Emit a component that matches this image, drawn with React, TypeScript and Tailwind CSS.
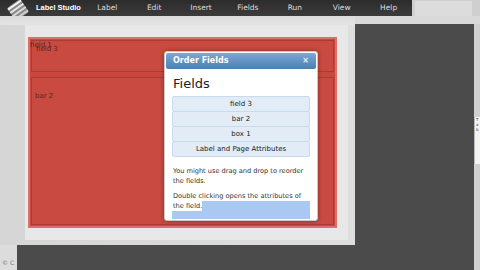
import React from 'react';

const menu = ['Label', 'Edit', 'Insert', 'Fields', 'Run', 'View', 'Help'];
const fields = ['field 3', 'bar 2', 'box 1', 'Label and Page Attributes'];

function Logo() {
  return (
    <svg width="24" height="22" viewBox="0 0 24 22" className="shrink-0">
      <g transform="rotate(-35 12 11)">
        <rect x="4" y="3" width="16" height="16" rx="2" fill="#8a8a8a" />
        <rect x="4" y="4" width="16" height="2" fill="#f2f2f2" />
        <rect x="4" y="8" width="16" height="2" fill="#e8e8e8" />
        <rect x="4" y="12" width="16" height="2" fill="#dcdcdc" />
        <rect x="4" y="16" width="16" height="2" fill="#cfcfcf" />
      </g>
    </svg>
  );
}

function OrderFields() {
  return (
    <div className="absolute left-[164px] top-[26px] w-[154px] h-[170px] bg-white rounded-[3px] border border-[#c9c9c9] shadow-[0_0_4px_rgba(0,0,0,0.35)] p-[1px] flex flex-col">
      <div className="h-[16px] rounded-[2px] bg-gradient-to-b from-[#7aa7d6] to-[#4d7fb3] flex items-center justify-between px-[7px] shrink-0">
        <span className="text-[8px] font-bold text-white">Order Fields</span>
        <span className="text-[8px] font-bold text-[#e4eefa] leading-none">×</span>
      </div>
      <div className="px-[6px] flex flex-col">
        <div className="text-[13px] leading-none text-[#222] mt-[8px] mb-[6px] pl-[1px]">Fields</div>
        <div className="flex flex-col">
          {fields.map((f) => (
            <div
              key={f}
              className="h-[16px] flex items-center justify-center bg-[#e1ecf7] border border-[#c8dbee] -mt-[1px] first:mt-0 text-[7px] text-[#222] rounded-[2px]"
            >
              {f}
            </div>
          ))}
        </div>
        <div className="mt-[9px] text-[6.6px] leading-[10px] text-[#333] pl-[1px]">
          You might use drag and drop to reorder the fields.
        </div>
        <div className="mt-[5px] text-[6.6px] leading-[10px] text-[#333] pl-[1px]">
          <div>Double clicking opens the attributes of</div>
          <div className="flex">
            <span>the field.</span>
            <span className="flex-1 bg-[#a9c9f2]" />
          </div>
          <div className="h-[8px] bg-[#a9c9f2] -ml-[1px]" />
        </div>
      </div>
    </div>
  );
}

export default function App() {
  return (
    <div className="w-[480px] h-[270px] overflow-hidden bg-[#4b4b4b] flex flex-col font-['DejaVu_Sans',sans-serif]">
      <div className="h-[16px] flex shrink-0">
        <div className="w-[412px] bg-gradient-to-b from-[#2c2c2c] to-[#3b3b3b] flex items-center">
          <div className="pl-[6px] w-[34px] -mt-[2px] h-[16px] overflow-visible">
            <Logo />
          </div>
          <span className="text-[7.5px] font-bold text-white ml-[2px] w-[48px] whitespace-nowrap font-['Liberation_Sans',sans-serif]">
            Label Studio
          </span>
          {menu.map((m) => (
            <span key={m} className="w-[47px] text-center text-[7.5px] text-[#dedede]">
              {m}
            </span>
          ))}
        </div>
        <div className="flex-1 bg-[#cfcfcf] pl-[3px] pr-[8px] pt-[1px]">
          <div className="h-full bg-[#dcdcdc]" />
        </div>
      </div>

      <div className="flex-1 flex">
        <div className="w-[355px] flex flex-col">
          <div className="h-[229px] bg-gradient-to-r from-[#d6d6d6] to-[#dedede] flex flex-col">
            <div className="h-[9px] bg-gradient-to-b from-[#dcdcdc] to-[#e4e4e4]" />
            <div className="flex-1 flex pl-[25px] pr-[7px] pb-[5px] relative">
              <div className="flex-1 bg-[#e8e8e8] pt-[12px] pl-[3px] pr-[11px] pb-[12px]">
                <div className="h-full bg-[#c9473e] border-[2px] border-[#d9716b] flex flex-col p-[1px] gap-[5px]">
                  <div className="h-[32px] bg-[#c84a41] border border-[#a93c34] relative shrink-0">
                    <span className="absolute left-[-2px] top-[1px] text-[7px] text-[#5c2620] leading-none">field 1</span>
                    <span className="absolute left-[4px] top-[5px] text-[7px] text-[#5c2620] leading-none">field 3</span>
                  </div>
                  <div className="flex-1 bg-[#c84a41] border border-[#a93c34] pl-[3px] pt-[3px]">
                    <span className="text-[7px] text-[#5c2620] leading-none">bar 2</span>
                  </div>
                </div>
              </div>
              <OrderFields />
            </div>
          </div>
          <div className="flex-1 flex">
            <div className="w-[17px] bg-[#dcdcdc] flex items-end pb-[4px] pl-[2px]">
              <span className="text-[6px] text-[#777] leading-none">© C</span>
            </div>
            <div className="flex-1 bg-[#4b4b4b]" />
          </div>
        </div>
        <div className="flex-1 flex flex-col">
          <div className="h-[8px] bg-[#d9d9d9] shrink-0" />
          <div className="flex-1 flex">
            <div className="flex-1 bg-[#4b4b4b]" />
            <div className="w-[6px] bg-[#d0d0d0] flex flex-col pt-[93px]">
              <div className="h-[47px] bg-[#f4f4f4] border-l border-[#bbb] text-[4px] text-[#444] leading-[5px] pl-[1px]">
                T<br />a<br />b
              </div>
            </div>
          </div>
        </div>
      </div>
    </div>
  );
}
